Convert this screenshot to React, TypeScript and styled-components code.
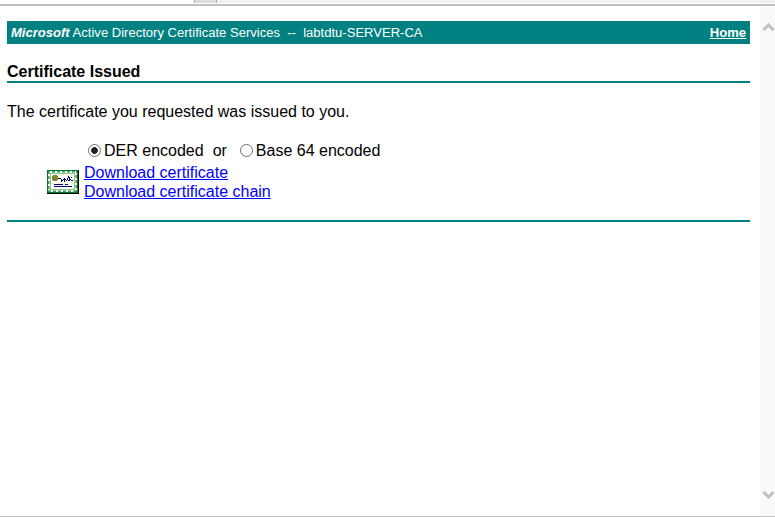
import React, { useState } from "react";
import styled, { createGlobalStyle } from "styled-components";

const GlobalStyle = createGlobalStyle`
  * { box-sizing: border-box; }
  body {
    margin: 0;
    background: #fff;
    color: #000;
    font: 16px/18px "Liberation Sans", Arial, sans-serif;
    overflow: hidden;
  }
`;

const Window = styled.div`
  width: 775px;
  height: 517px;
  display: flex;
  flex-direction: column;
  border-bottom: 1px solid #c3c3c3;
`;

const TabStrip = styled.div`
  flex: none;
  display: flex;
  height: 6px;
  border-bottom: 2px solid #c0c0c0;
`;

const OpenTab = styled.div`
  width: 194px;
`;

const NewTab = styled.div`
  width: 23px;
  height: 3px;
  background: #dcdcdc;
  border: solid #acacac;
  border-width: 0 1px;
`;

const StripRest = styled.div`
  flex: 1;
  height: 3px;
  background: #f0f0f0;
`;

const Viewport = styled.div`
  flex: 1;
  display: flex;
`;

const Page = styled.main`
  flex: 1;
  padding: 15px 10px 0 7px;
`;

const Banner = styled.header`
  display: flex;
  justify-content: space-between;
  height: 23px;
  padding: 0 4px;
  background: #008080;
  color: #fff;
  font-size: 13.05px;
  line-height: 23px;
  white-space: pre;
`;

const HomeLink = styled.a`
  color: #fff;
  font-weight: bold;
`;

const Title = styled.h1`
  margin: 18px 0 0;
  height: 19px;
  font-size: 16px;
  line-height: 19px;
`;

const Rule = styled.div`
  height: 2px;
  background: #008080;
`;

const Message = styled.p`
  margin: 20px 0 0;
`;

const Options = styled.div`
  display: flex;
  align-items: center;
  margin: 21px 0 0 81px;
  height: 18px;
  white-space: pre;
`;

const Option = styled.label`
  display: flex;
  align-items: flex-start;
`;

const Radio = styled.input`
  appearance: none;
  width: 13px;
  height: 13px;
  margin: 2px 3px 0 0;
  border: 1px solid #707070;
  border-radius: 50%;
  background: #fff;
  &:checked {
    background: radial-gradient(circle, #222 0 3px, #fff 3.7px);
  }
`;

const Or = styled.span`
  margin: 0 13px 0 9px;
`;

const Downloads = styled.div`
  display: flex;
  align-items: flex-start;
  margin: 3px 0 19px 40px;
  height: 38px;
`;

const CertificateIcon = styled.svg`
  width: 32px;
  height: 24px;
  margin: 7px 5px 0 0;
`;

const Links = styled.div`
  display: flex;
  flex-direction: column;
  line-height: 19px;
`;

const Link = styled.a`
  color: #0000ff;
  height: 19px;
`;

const Scrollbar = styled.div`
  width: 15px;
  display: flex;
  flex-direction: column;
  justify-content: space-between;
  padding: 16px 0 16px 2px;
  background: #f9f9f9;
`;

const Arrow = styled.svg`
  width: 13px;
  height: 10px;
`;

function Certificate() {
  return (
    <CertificateIcon viewBox="0 0 32 24" shapeRendering="crispEdges">
      <path d="M0 0h32v24H0z" fill="#000" />
      <path d="M0 0h31v23H0z" fill="#007828" />
      <path d="M1 1h29v21H1z" fill="#3f9f5a" />
      <path d="M2 2h27v19H2z" fill="#8cc79a" />
      <path d="M3 2h26M4 21h25" stroke="#fff" strokeWidth="2" strokeDasharray="2 3" />
      <path d="M2 4v16M29 3v17" stroke="#fff" strokeWidth="2" strokeDasharray="2 3" />
      <path d="M4 4h23v15H4z" fill="#fff" />
      <path d="M12 5h1v1h-1zM16 4h1v1h-1zM24 5h1v1h-1zM5 13h1v1H5zM11 12h1v1h-1zM18 13h1v1h-1zM25 13h1v1h-1zM8 18h1v1H8zM15 18h1v1h-1zM25 18h1v1h-1zM20 5h1v1h-1z" fill="#ffe94a" />
      <path d="M6 5h4v1h1v4h-1v1H6v-1H5V6h1z" fill="#808020" />
      <path d="M7 6h1v1H7zM9 7h1v1H9zM7 9h1v1H7z" fill="#9c9860" />
      <path d="M11 8h3v1h-3zM14 9h1v3h-1zM15 10h1v1h-1zM16 9h1v1h-1zM17 8h1v4h-1zM18 9h1v1h-1zM19 10h1v1h-1zM20 8h1v2h-1zM21 6h1v2h-1zM22 7h1v4h-1zM21 10h1v1h-1zM23 9h1v1h-1zM24 10h2v1h-2zM24 7h1v1h-1z" fill="#000060" />
      <path d="M7 14h9v1H7zM18 14h3v1h-3zM7 16h18v1H7z" fill="#000080" />
    </CertificateIcon>
  );
}

export default function App() {
  const [encoding, setEncoding] = useState("DER");
  return (
    <>
      <GlobalStyle />
      <Window>
        <TabStrip>
          <OpenTab />
          <NewTab />
          <StripRest />
        </TabStrip>
        <Viewport>
          <Page>
            <Banner>
              <span>
                <b><i>Microsoft</i></b>{" Active Directory Certificate Services \u00a0--\u00a0 labtdtu-SERVER-CA"}
              </span>
              <HomeLink href="#">Home</HomeLink>
            </Banner>
            <Title>Certificate Issued</Title>
            <Rule />
            <Message>The certificate you requested was issued to you.</Message>
            <Options>
              <Option>
                <Radio type="radio" name="encoding" checked={encoding === "DER"} onChange={() => setEncoding("DER")} />
                DER encoded
              </Option>
              <Or>or</Or>
              <Option>
                <Radio type="radio" name="encoding" checked={encoding === "B64"} onChange={() => setEncoding("B64")} />
                Base 64 encoded
              </Option>
            </Options>
            <Downloads>
              <Certificate />
              <Links>
                <Link href="#">Download certificate</Link>
                <Link href="#">Download certificate chain</Link>
              </Links>
            </Downloads>
            <Rule />
          </Page>
          <Scrollbar>
            <Arrow viewBox="0 0 13 10">
              <path d="M1.500 8L6.500 3L11.500 8" fill="none" stroke="#bfbfbf" strokeWidth="3" />
            </Arrow>
            <Arrow viewBox="0 0 13 10">
              <path d="M1.500 2L6.500 7L11.500 2" fill="none" stroke="#bfbfbf" strokeWidth="3" />
            </Arrow>
          </Scrollbar>
        </Viewport>
      </Window>
    </>
  );
}
